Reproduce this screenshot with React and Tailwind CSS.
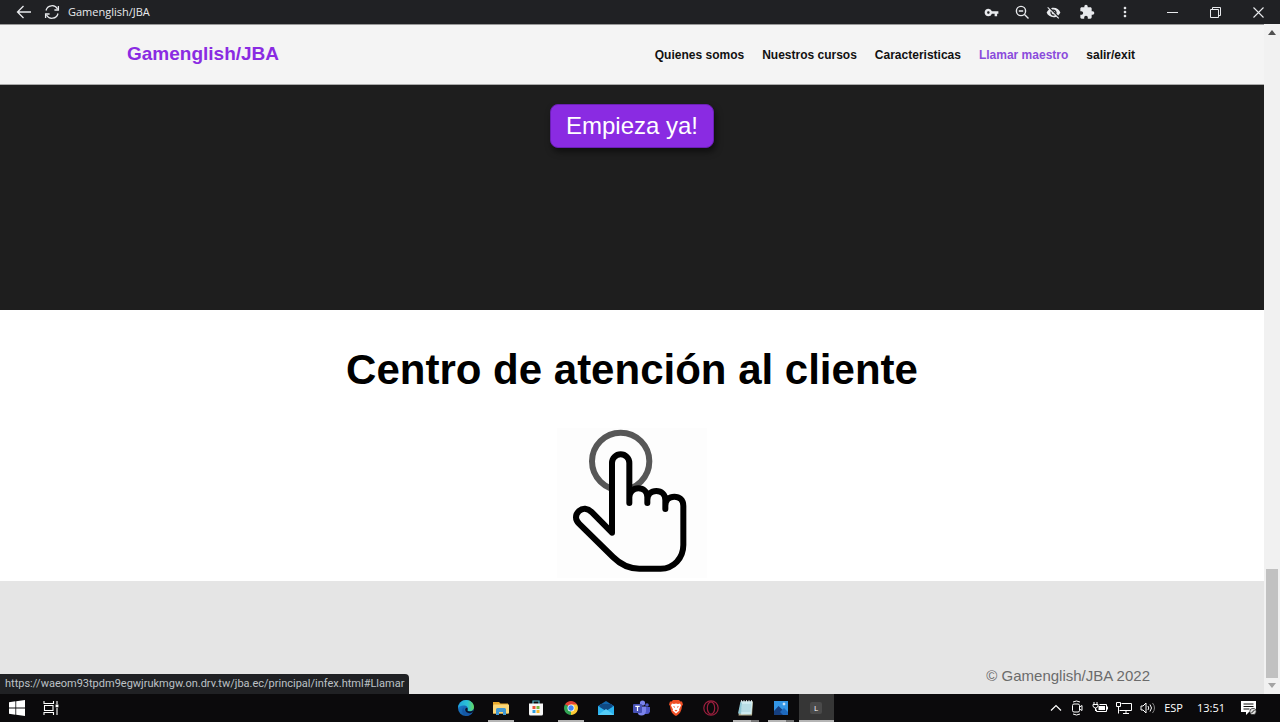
import React from "react";
import { MdVpnKey, MdVisibilityOff, MdExtension, MdMoreVert } from "react-icons/md";

const navLinks = [
  { label: "Quienes somos", href: "#Quienes" },
  { label: "Nuestros cursos", href: "#Cursos" },
  { label: "Caracteristicas", href: "#Caracteristicas" },
  { label: "Llamar maestro", href: "#Llamar", active: true },
  { label: "salir/exit", href: "#salir" },
];

function TitleBar() {
  return (
    <header className="flex h-6 shrink-0 items-center justify-between bg-[#202124] pl-4 text-[#e8eaed]">
      <div className="flex items-center gap-3">
        <button aria-label="Atrás" className="flex">
          <svg width="16" height="16" viewBox="0 0 16 16" fill="none" stroke="currentColor" strokeWidth="1.3">
            <path d="M15 8H1.5M7.5 2L1.5 8l6 6" />
          </svg>
        </button>
        <button aria-label="Recargar" className="flex">
          <svg width="16" height="16" viewBox="0 0 16 16" fill="none" stroke="currentColor" strokeWidth="1.3">
            <path d="M2 6.500A6.200 6.200 0 0 1 13.500 5M14 9.500A6.200 6.200 0 0 1 2.500 11" />
            <path d="M14.400 2v4h-4M1.600 14v-4h4" />
          </svg>
        </button>
        <span className="-ml-1 text-[11px]">Gamenglish/JBA</span>
      </div>
      <div className="flex items-center">
        <div className="flex items-center gap-4 pr-[34px]">
          <button aria-label="Contraseñas"><MdVpnKey size={15} /></button>
          <button aria-label="Zoom">
            <svg width="15" height="15" viewBox="0 0 15 15" fill="none" stroke="currentColor" strokeWidth="1.4">
              <circle cx="6" cy="6" r="4.600" /><path d="M9.500 9.500l4 4M3.800 6h4.400" />
            </svg>
          </button>
          <button aria-label="Cookies bloqueadas"><MdVisibilityOff size={15} /></button>
          <button aria-label="Extensiones" className="pl-0.5"><MdExtension size={16} /></button>
          <button aria-label="Más opciones" className="pl-1.5"><MdMoreVert size={16} /></button>
        </div>
        <div className="flex items-center gap-8 pr-4">
          <button aria-label="Minimizar">
            <svg width="11" height="11" viewBox="0 0 11 11" stroke="currentColor"><path d="M0 5.500h11" /></svg>
          </button>
          <button aria-label="Restaurar">
            <svg width="11" height="11" viewBox="0 0 11 11" fill="none" stroke="currentColor">
              <path d="M.5 2.500h8v8h-8zM2.500 2.500v-2h8v8h-2" />
            </svg>
          </button>
          <button aria-label="Cerrar">
            <svg width="11" height="11" viewBox="0 0 11 11" stroke="currentColor" strokeWidth="1.1"><path d="M.5.500l10 10M10.500.500l-10 10" /></svg>
          </button>
        </div>
      </div>
    </header>
  );
}

function TouchHand() {
  return (
    <svg className="size-[150px] bg-[#fdfdfd]" viewBox="51 24 450 450" fill="none" strokeLinecap="round" strokeLinejoin="round" role="img" aria-label="Llamar maestro">
      <circle cx="242" cy="124" r="86" stroke="#575757" strokeWidth="18" />
      <path
        d="M268 213V129a26 26 0 0 0-52 0V338L156 277C143 264 128 263 117 273C105 284 105 299 117 311L219 411Q254 446 298 446H362C401 446 430 414 430 375V258C430 239 418 230 403 230C394 230 384 234 376 245C373 223 362 213 349 213C337 213 328 219 322 227C317 212 307 205 295 205C283 205 274 210 268 221Z"
        fill="#fdfdfd"
      />
      <path
        d="M268 249V129a26 26 0 0 0-52 0V338L156 277C143 264 128 263 117 273C105 284 105 299 117 311L219 411Q254 446 298 446H362C401 446 430 414 430 375V258C430 239 418 230 403 230C388 230 376 240 376 257V267V241C376 223 364 213 349 213C334 213 322 223 322 240V249V232C322 214 310 205 295 205C280 205 268 216 268 232"
        stroke="#000"
        strokeWidth="18"
      />
    </svg>
  );
}

function ScrollBar() {
  return (
    <div className="flex w-4 shrink-0 flex-col items-center justify-between bg-[#f1f1f1] pt-1.5 pb-1.5" aria-hidden="true">
      <svg width="8" height="5" viewBox="0 0 8 5"><path d="M0 5l4-5 4 5z" fill="#505050" /></svg>
      <div className="flex flex-col items-center gap-[5px]">
        <div className="h-[109px] w-3 bg-[#c1c1c1]" />
        <svg width="8" height="5" viewBox="0 0 8 5"><path d="M0 0l4 5 4-5z" fill="#a3a3a3" /></svg>
      </div>
    </div>
  );
}

const EdgeIcon = () => (
  <svg width="16" height="16" viewBox="0 0 16 16">
    <defs>
      <linearGradient id="edgeTop" x1="0" x2="1"><stop stopColor="#1fa5dc" /><stop offset=".6" stopColor="#2cc3d5" /><stop offset="1" stopColor="#66d957" /></linearGradient>
      <linearGradient id="edgeLow" x1="0" x2="1" y2="1"><stop stopColor="#1b83d8" /><stop offset="1" stopColor="#114a8b" /></linearGradient>
    </defs>
    <circle cx="8" cy="8" r="8" fill="url(#edgeLow)" />
    <path d="M.1 7C1 2.800 4.400 0 8.200 0C12.700 0 16 3.300 16 7.200c0 2.400-1.900 3.900-4.200 3.900c-1.700 0-2.600-.6-2.300-1.200c1-1.700.1-3.800-2.400-4.300C4 5 1.200 6 .1 8z" fill="url(#edgeTop)" />
    <path d="M5.800 7.500c-.8 3.600 2 6.500 6.600 5.700l2.400-1c-1.600 2.600-4 3.800-6.800 3.800C3.900 14.400 3.300 9.400 5.800 7.500z" fill="#1557a5" />
    <path d="M9.500 9.900c-.4 1 1.200 1.900 3.600 1.300l2.300-.8-.8 1.900c-3.500 1.800-7 .6-7.400-2.200c-.1-1.200.6-2.300 1.600-2.300c1 .4 1.100 1.300.7 2.100z" fill="#09122a" />
  </svg>
);

const FolderIcon = () => (
  <svg width="16" height="16" viewBox="0 0 16 16">
    <path d="M0 2h6l1.500 1.500H15v10H0z" fill="#e9a82b" />
    <path d="M1 4.500h15v9H0V5.500z" fill="#fbd779" />
    <path d="M3 15V9.500q0-1.500 1.500-1.500h7Q13 8 13 9.500V15h-3v-3H6v3z" fill="#4398d2" />
  </svg>
);

const StoreIcon = () => (
  <svg width="16" height="16" viewBox="0 0 16 16">
    <path d="M5 4V1h6v3" fill="none" stroke="#51b6c8" strokeWidth="1.200" />
    <path d="M1 3.500h14V14q0 1.500-1.500 1.500h-11Q1 15.500 1 14z" fill="#f7f7f7" />
    <path d="M4.500 6h3v3h-3z" fill="#e95035" /><path d="M8.500 6h3v3h-3z" fill="#7bb83b" />
    <path d="M4.500 10h3v3h-3z" fill="#2e9fe3" /><path d="M8.500 10h3v3h-3z" fill="#f4b52b" />
  </svg>
);

const ChromeIcon = () => (
  <svg width="14" height="14" viewBox="0 0 14 14">
    <path d="M7 7L.94 3.500A7 7 0 0 1 13.060 3.500z" fill="#e54334" />
    <path d="M7 7L13.060 3.500A7 7 0 0 1 7 14z" fill="#fbc934" />
    <path d="M7 7v7A7 7 0 0 1 .94 3.500z" fill="#31a553" />
    <path d="M7 3.500h6.060L10 8.500z" fill="#fbc934" />
    <path d="M.94 3.500L4 8.700 7 7z" fill="#31a553" />
    <circle cx="7" cy="7" r="3.500" fill="#fff" /><circle cx="7" cy="7" r="2.700" fill="#4285f4" />
  </svg>
);

const MailIcon = () => (
  <svg width="16" height="14" viewBox="0 0 16 14">
    <path d="M0 5l8-5 8 5v9H0z" fill="#1265ab" /><path d="M2 3h12v6H2z" fill="#104a83" />
    <path d="M0 5l8 5 8-5v9H0z" fill="#2cb3ef" /><path d="M0 14l8-6 8 6z" fill="#54cdf8" />
  </svg>
);

const TeamsIcon = () => (
  <svg width="17" height="16" viewBox="0 0 17 16">
    <circle cx="14" cy="5" r="1.800" fill="#5059c9" /><circle cx="9.500" cy="3" r="2.600" fill="#7b83eb" />
    <path d="M12 7h5v4.500q-.5 2.500-3 2.500h-2z" fill="#5059c9" />
    <path d="M5 6.500h8V11q-.5 4.500-4.500 4.500T4.500 11z" fill="#7b83eb" />
    <rect y="4" width="9" height="9" rx="1" fill="#4650b5" />
    <path d="M2.300 6.300h4.400M4.500 6.300v4.700" stroke="#fff" strokeWidth="1.200" />
  </svg>
);

const BraveIcon = () => (
  <svg width="14" height="16" viewBox="0 0 14 16">
    <path d="M4 0h6l1.500 1.500 1.500 0 1 3L13 6c-.5 5-2 8-6 10C3 14 1.500 11 1 6L0 4.500l1-3h1.500z" fill="#f04f25" />
    <path d="M3 3.500l2 .500 2-.500 2 .500 2-.500 1 2-2 4 .5 1L7 13.500 3.500 10.500l.5-1-2-4z" fill="#fff" />
    <path d="M4 6l2 .7L5.500 8zM10 6l-2 .7.500 1.300zM5.500 10.500L7 9.800l1.500.7L7 11.500z" fill="#f04f25" />
  </svg>
);

const OperaIcon = () => (
  <svg width="16" height="16" viewBox="0 0 16 16" fill="none" stroke="#9c1f3e" strokeWidth="1.200">
    <circle cx="8" cy="8" r="7.200" /><ellipse cx="8" cy="8" rx="3.700" ry="6.200" />
  </svg>
);

const NotepadIcon = () => (
  <svg width="16" height="16" viewBox="0 0 16 16">
    <path d="M3 1.500h12L14 15.500H.500z" fill="#b8b08f" /><path d="M2.500 1.500H14L12.500 14.500 0 13.500z" fill="#8fc6d4" />
    <path d="M4 1.500h10.500L13.500 14 3 14.500z" fill="#cdeaf0" />
    <path d="M3.500 0v2.500M6 0v2.500M8.500 0v2.500M11 0v2.500M13.500 0v2.500" stroke="#eef4f5" strokeWidth=".8" />
    <path d="M4 5h9M4 7h9M3.500 9h9M3 11h9.500" stroke="#8bc0ce" strokeWidth=".6" />
  </svg>
);

const PhotosIcon = () => (
  <svg width="14" height="14" viewBox="0 0 14 14">
    <path d="M0 0h14v14H0z" fill="#3396e6" /><path d="M0 10l4.500-5L14 14H0z" fill="#153f80" />
    <path d="M6 11l4-4 4 4v3H9z" fill="#1e69bd" /><path d="M10 1l.6 1.600L12 3l-1.400.6L10 5l-.6-1.400L8 3l1.400-.4z" fill="#fff" />
  </svg>
);

const LetterIcon = () => (
  <span className="flex size-3 items-center justify-center rounded-xs bg-[#4a4a4a] text-[8px] leading-3 text-white">L</span>
);

const apps = [
  { name: "Edge", Icon: EdgeIcon },
  { name: "Explorador de archivos", Icon: FolderIcon, open: true },
  { name: "Tienda", Icon: StoreIcon },
  { name: "Chrome", Icon: ChromeIcon, open: true },
  { name: "Correo", Icon: MailIcon },
  { name: "Teams", Icon: TeamsIcon },
  { name: "Brave", Icon: BraveIcon },
  { name: "Opera", Icon: OperaIcon },
  { name: "Bloc de notas", Icon: NotepadIcon, open: true, stacked: true },
  { name: "Fotos", Icon: PhotosIcon, open: true, stacked: true },
  { name: "Gamenglish/JBA", Icon: LetterIcon, open: true, current: true },
];

function AppButton({ app }) {
  const { Icon } = app;
  return (
    <button aria-label={app.name} className={app.current ? "flex h-7 w-[35px] flex-col items-center bg-[#363636]" : "flex h-7 w-[35px] flex-col items-center"}>
      <span className="flex flex-1 items-center justify-center pt-0.5">
        <Icon />
      </span>
      <span className={app.current ? "flex h-0.5 w-full" : "flex h-0.5 w-[26px]"}>
        {app.open && <span className="flex-1 bg-[#b5b5b5]" />}
        {app.stacked && <span className="w-2 bg-[#777777]" />}
      </span>
    </button>
  );
}

function TaskBar() {
  return (
    <footer className="grid h-7 shrink-0 grid-cols-[1fr_auto_1fr] items-center bg-[#0b0a0c] text-white">
      <div className="flex items-center gap-[18px] pl-[9px]">
        <button aria-label="Inicio">
          <svg width="16" height="16" viewBox="0 0 16 16" fill="#fff"><path d="M0 2.200L6.400 1.300V7.600H0zM7.200 1.200L16 0v7.600H7.200zM0 8.400h6.400v6.300L0 13.800zM7.200 8.400H16V16l-8.800-1.200z" /></svg>
        </button>
        <button aria-label="Vista de tareas">
          <svg width="16" height="16" viewBox="0 0 16 16" fill="none" stroke="#fff" strokeWidth="1.100">
            <path d="M1 1v2.500h9.500V1M1 15v-2.500h9.500V15M1.500 5.500h8.500v5H1.500zM14 1v3M14 8v7" /><path d="M12.600 4.500h2.800v2.800h-2.800z" fill="#fff" stroke="none" />
          </svg>
        </button>
      </div>
      <nav className="flex pl-0.5" aria-label="Aplicaciones">
        {apps.map((app) => (
          <AppButton key={app.name} app={app} />
        ))}
      </nav>
      <div className="flex items-center justify-end text-[11px]">
        <div className="flex items-center gap-2 pr-2">
          <svg width="12" height="12" viewBox="0 0 12 12" fill="none" stroke="#fff" strokeWidth="1.200"><path d="M1 8.500l5-5 5 5" /></svg>
          <svg width="14" height="16" viewBox="0 0 14 16" fill="none" stroke="#fff" strokeWidth="1">
            <path d="M3 2Q6.500 0 10 2M3 14Q6.500 16 10 14M9.500 7L12 5.500v5L9.500 9" /><rect x="2.500" y="4" width="7" height="8" rx="1.500" />
          </svg>
          <svg width="16" height="14" viewBox="0 0 16 14" fill="none" stroke="#fff">
            <path d="M7.500 3.500h7v7h-10V8.500" /><path d="M6.500 5h6.500v4h-6.500V5zM14.500 5.500H16v3h-1.500z" fill="#fff" stroke="none" />
            <path d="M2 1v2M5 1v2M1 3.500h5v1.500q-.5 2-2.500 2T1 5zM3.500 7v3" />
          </svg>
          <svg width="16" height="14" viewBox="0 0 16 14" fill="none" stroke="#fff"><path d="M5.500 2.500h10v7h-12M10 9.500v3M7 12.500h6M.500 1.500h4v4h-4zM2.500 5.500v7" /></svg>
          <svg width="16" height="14" viewBox="0 0 16 14" fill="none" stroke="#fff">
            <path d="M1 5h2l3-3v10L3 9H1z" /><path d="M8 5q1.500 2 0 4M10 3.500q3 3.500 0 7" /><path d="M12.500 2q4 5 0 10" stroke="#888" />
          </svg>
        </div>
        <span className="pr-3.5">ESP</span>
        <time className="pr-4">13:51</time>
        <button aria-label="Notificaciones" className="pr-[23px]">
          <svg width="16" height="16" viewBox="0 0 16 16">
            <path d="M0 1h15v11H8l-3 3v-3H0z" fill="#fff" /><path d="M2.500 4h10M2.500 6.500h10M2.500 9h6" stroke="#111" />
            <circle cx="12" cy="11.500" r="3.200" fill="#ddd" stroke="#111" strokeWidth=".7" /><path d="M10.500 13l3-3" stroke="#111" />
          </svg>
        </button>
      </div>
    </footer>
  );
}

export default function App() {
  return (
    <div className="flex min-h-screen flex-col font-['Open_Sans','Noto_Sans',sans-serif]">
      <TitleBar />
      <div className="relative flex flex-1">
        <div className="flex min-w-0 flex-1 flex-col font-['Liberation_Sans',Arial,sans-serif]">
          <header className="flex h-[61px] items-center justify-between border-y border-t-[#999999] border-b-[#aaaaaa] bg-[#f4f4f4] pr-[129px] pl-[127px]">
            <a href="#inicio" className="text-[19px] font-bold text-[#8a2be2]">Gamenglish/JBA</a>
            <nav className="flex gap-[18px] text-[12px] font-bold">
              {navLinks.map((link) => (
                <a key={link.label} href={link.href} className={link.active ? "text-[#8a4bdc]" : "text-[#111111]"}>
                  {link.label}
                </a>
              ))}
            </nav>
          </header>
          <section className="flex h-[225px] items-start justify-center bg-[#1e1e1e] pt-[19px]">
            <button className="rounded-lg border border-[#6a1fb5] bg-[#8a2be2] px-[15px] py-1.5 text-[24px] leading-[30px] text-white shadow-[2px_4px_6px_rgba(0,0,0,0.5)]">
              Empieza ya!
            </button>
          </section>
          <main className="flex flex-col items-center gap-[34px] bg-white pt-9 pb-[3px]">
            <h1 className="text-[42px] leading-[48px] font-bold text-black">Centro de atención al cliente</h1>
            <a href="#Llamar">
              <TouchHand />
            </a>
          </main>
          <footer className="flex flex-1 items-end justify-end bg-[#e5e5e5] pr-[114px] pb-2">
            <p className="text-[15px] leading-5 text-[#6b6b6b]">© Gamenglish/JBA 2022</p>
          </footer>
        </div>
        <ScrollBar />
        <div className="absolute bottom-0 left-0 flex h-5 items-center rounded-tr-sm bg-[#202124] px-[5px] font-['Roboto',sans-serif] text-[11px] text-[#bdc1c6]">
          https://waeom93tpdm9egwjrukmgw.on.drv.tw/jba.ec/principal/infex.html#Llamar
        </div>
      </div>
      <TaskBar />
    </div>
  );
}
